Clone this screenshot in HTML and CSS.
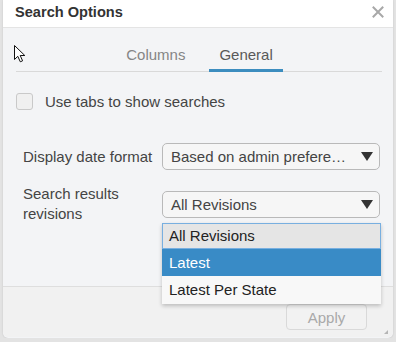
FILE: index.html
```html
<!DOCTYPE html>
<html lang="en">
<head>
    <meta charset="UTF-8">
    <title>Search Options</title>
    <link rel="stylesheet" href="styles.css">
</head>
<body>

<div class="dialog">
    <div class="dialog-header">
        <span class="dialog-title">Search Options</span>
        <svg class="close" width="12" height="12" viewBox="0 0 12 12">
            <path d="M1.5 1.5 L10.5 10.5 M10.5 1.5 L1.5 10.5" stroke="#a8a8a8" stroke-width="2" stroke-linecap="square"/>
        </svg>
    </div>

    <div class="dialog-body">
        <div class="tabs">
            <span class="tab">Columns</span>
            <span class="tab active">General</span>
        </div>

        <label class="check-row">
            <span class="checkbox"></span>
            <span>Use tabs to show searches</span>
        </label>

        <div class="form">
            <div class="form-label">Display date format</div>
            <div class="select">
                <span>Based on admin prefere…</span>
                <svg class="caret" width="12" height="9" viewBox="0 0 12 9"><polygon points="0,0 12,0 6,9" fill="#333"/></svg>
            </div>

            <div class="form-label">Search results revisions</div>
            <div class="select">
                <span>All Revisions</span>
                <svg class="caret" width="12" height="9" viewBox="0 0 12 9"><polygon points="0,0 12,0 6,9" fill="#333"/></svg>
                <ul class="options">
                    <li class="focused">All Revisions</li>
                    <li class="hover">Latest</li>
                    <li class="last">Latest Per State</li>
                </ul>
            </div>
        </div>
    </div>

    <div class="dialog-footer">
        <button class="apply">Apply</button>
        <span class="grip"></span>
    </div>

    <svg class="cursor" width="13" height="18" viewBox="0 0 13 18">
        <path d="M0.5 0.5 L0.5 14.5 L3.8 11.3 L6.3 16.8 L8.6 15.8 L6.2 10.5 L10.8 10.5 Z" fill="#fff" stroke="#111" stroke-width="1" stroke-linejoin="miter"/>
    </svg>
</div>

</body>
</html>
```

FILE: styles.css
```css
body {
    margin: 0;
    background: #e3e3e3;
    font-family: 'Liberation Sans', Arial, sans-serif;
    font-size: 15px;
    color: #444;
}
.dialog {
    position: relative;
    margin-left: 3px;
    width: 390px;
    height: 338px;
    background: #f3f4f6;
    border-radius: 0 0 5px 5px;
    box-shadow: 0 0 2px rgba(0,0,0,0.15);
}
.dialog-header {
    height: 27px;
    background: #fff;
    border-bottom: 1px solid #e4e4e4;
    display: flex;
    align-items: center;
    justify-content: space-between;
    padding: 0 9px 0 12px;
}
.dialog-title {
    font-weight: bold;
    font-size: 14.6px;
    color: #333;
    margin-top: -3px;
}
.close {
    margin-top: -3px;
}
.dialog-body {
    padding: 18px 11px 0 13px;
    height: 240px;
    border-bottom: 1px solid #dedede;
}
.tabs {
    display: flex;
    justify-content: center;
    gap: 14px;
    border-bottom: 1px solid #d9d9d9;
    padding-left: 1px;
}
.tab {
    line-height: 18px;
    padding: 0 10px 5px;
    margin-bottom: -1px;
    border-bottom: 3px solid transparent;
    color: #858585;
}
.tab.active {
    color: #595959;
    border-bottom-color: #3c8dbf;
}
.check-row {
    display: flex;
    align-items: center;
    gap: 12px;
    margin-top: 21px;
    height: 17px;
    color: #444;
}
.checkbox {
    width: 15px;
    height: 15px;
    border: 1px solid #c9c9c9;
    border-radius: 3px;
    background: #f0f0f0;
}
.form {
    display: grid;
    grid-template-columns: 139px 218px;
    align-items: center;
    row-gap: 14px;
    margin-top: 33px;
    padding-left: 7px;
}
.form-label {
    line-height: 20px;
    color: #444;
    padding-right: 8px;
}
.select {
    position: relative;
    height: 25px;
    border: 1px solid #b9b9b9;
    border-radius: 5px;
    background: #f6f6f6;
    display: flex;
    align-items: center;
    justify-content: space-between;
    padding: 0 6px 0 8px;
    color: #444;
}
.options {
    position: absolute;
    top: 31px;
    left: -1px;
    width: 219px;
    margin: 0;
    padding: 0;
    list-style: none;
    background: #f8f8f8;
    box-shadow: 0 2px 4px rgba(0,0,0,0.22);
    color: #222;
    z-index: 2;
}
.options li {
    height: 26px;
    line-height: 26px;
    padding-left: 7px;
}
.options li.focused {
    background: #e5e5e5;
    border: 1px solid #78afe0;
    height: 24px;
    line-height: 24px;
    padding-left: 6px;
}
.options li.hover {
    background: #398bc6;
    color: #fff;
    height: 27px;
    line-height: 27px;
}
.options li.last {
    height: 28px;
    line-height: 28px;
}
.dialog-footer {
    position: relative;
    display: flex;
    justify-content: flex-end;
    padding: 17px 26px 0 0;
    background: #f1f1f1;
    height: 33px;
    border-radius: 0 0 5px 5px;
}
.apply {
    width: 81px;
    height: 26px;
    background: #f2f2f2;
    border: 1px solid #d9d9d9;
    border-radius: 4px;
    color: #a9a9a9;
    font-family: 'Liberation Sans', Arial, sans-serif;
    font-size: 15px;
    padding: 0;
}
.grip {
    position: absolute;
    right: 5px;
    bottom: 3px;
    width: 4px;
    height: 4px;
    background: #b5b5b5;
    clip-path: polygon(100% 0, 100% 100%, 0 100%);
}
.cursor {
    position: absolute;
    left: 11px;
    top: 45px;
}
```
